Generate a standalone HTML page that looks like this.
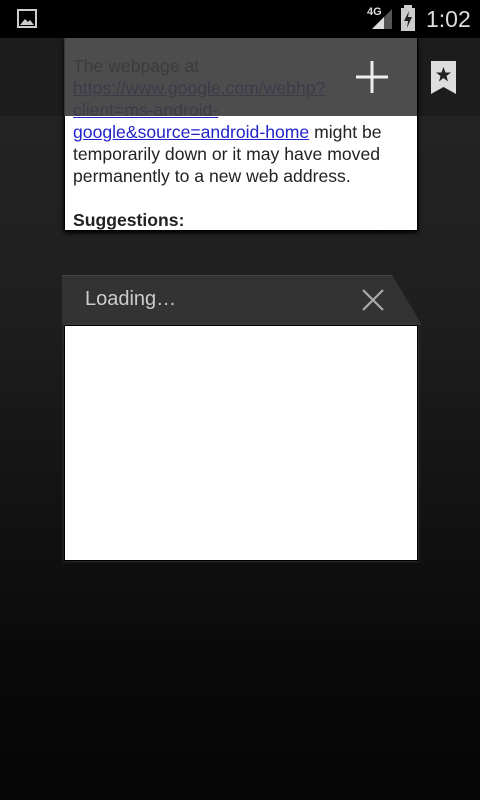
<!DOCTYPE html>
<html><head><style>
body{margin:0;width:480px;height:800px;overflow:hidden;background:linear-gradient(#262626 0px,#1f1f1f 300px,#0a0a0a 650px,#050505 800px);font-family:"Liberation Sans",sans-serif;position:relative}
.sb{position:absolute;left:0;top:0;width:480px;height:38px;background:#000}
.tb{position:absolute;left:0;top:38px;width:480px;height:78px;background:#1c1c1c}
.c1{position:absolute;left:64px;top:38px;width:352px;height:192px;background:#fff;border:1px solid #000;border-top:none;box-shadow:0 2px 4px #000;overflow:hidden}
.txt{position:absolute;left:8px;top:17px;width:345px;font-size:17.6px;line-height:22px;color:#222;white-space:nowrap}
.txt a{color:#2222cc;text-decoration:underline}
.ov{position:absolute;left:64px;top:38px;width:353px;height:78px;background:rgba(62,62,62,0.92)}
.c2h{position:absolute;left:62px;top:275px}
.c2{position:absolute;left:64px;top:325px;width:352px;height:234px;background:#fff;border:1px solid #000;box-shadow:0 0 3px #444}
</style></head><body>
<div class="sb">
<svg style="position:absolute;left:17px;top:9px" width="20" height="20"><rect x="1" y="1" width="18" height="17" fill="none" stroke="#ccc" stroke-width="2"/><path d="M3 16 L8 10 L11 13 L13 11 L17 16Z" fill="#ccc"/></svg>
<span style="position:absolute;left:367px;top:6px;color:#ddd;font-size:11px;font-weight:bold">4G</span>
<svg style="position:absolute;left:370px;top:6px" width="24" height="24"><path d="M2 23 L22 3 L22 23Z" fill="#555"/><path d="M2 23 L14 11 L14 23Z" fill="#ddd"/></svg>
<svg style="position:absolute;left:400px;top:5px" width="16" height="26"><rect x="4" y="0" width="8" height="3" fill="#ccc"/><rect x="1" y="3" width="14" height="23" fill="#ccc"/><path d="M9 6 L4 16 L8 16 L7 23 L12 12 L8 12Z" fill="#222"/></svg>
<span style="position:absolute;left:426px;top:6px;color:#ddd;font-size:23px">1:02</span>
</div>
<div class="tb"></div>
<div class="c1"><div class="txt">The webpage at<br><a>https://www.google.com/webhp?</a><br><a>client=ms-android-</a><br><a>google&amp;source=android-home</a> might be<br>temporarily down or it may have moved<br>permanently to a new web address.<br><br><b>Suggestions:</b></div></div>
<div class="ov"></div>
<svg style="position:absolute;left:355px;top:60px" width="34" height="34"><path d="M17 1V33M1 17H33" stroke="#eee" stroke-width="3"/></svg>
<svg style="position:absolute;left:431px;top:61px" width="25" height="33"><path d="M0 0H25V33L12.5 26L0 33Z" fill="#ddd"/><path d="M12.5 6L14.5 11.5H20L15.5 15L17 20.5L12.5 17L8 20.5L9.5 15L5 11.5H10.5Z" fill="#222"/></svg>
<svg class="c2h" width="362" height="52"><path d="M0 0H330L360 50H0Z" fill="#333"/><path d="M0 0.5H330" stroke="#444"/></svg>
<span style="position:absolute;left:85px;top:288px;color:#ccc;font-size:20px">Loading…</span>
<svg style="position:absolute;left:362px;top:289px" width="22" height="22"><path d="M1 1L21 21M21 1L1 21" stroke="#aaa" stroke-width="2.2"/></svg>
<div class="c2"></div>
</body></html>
